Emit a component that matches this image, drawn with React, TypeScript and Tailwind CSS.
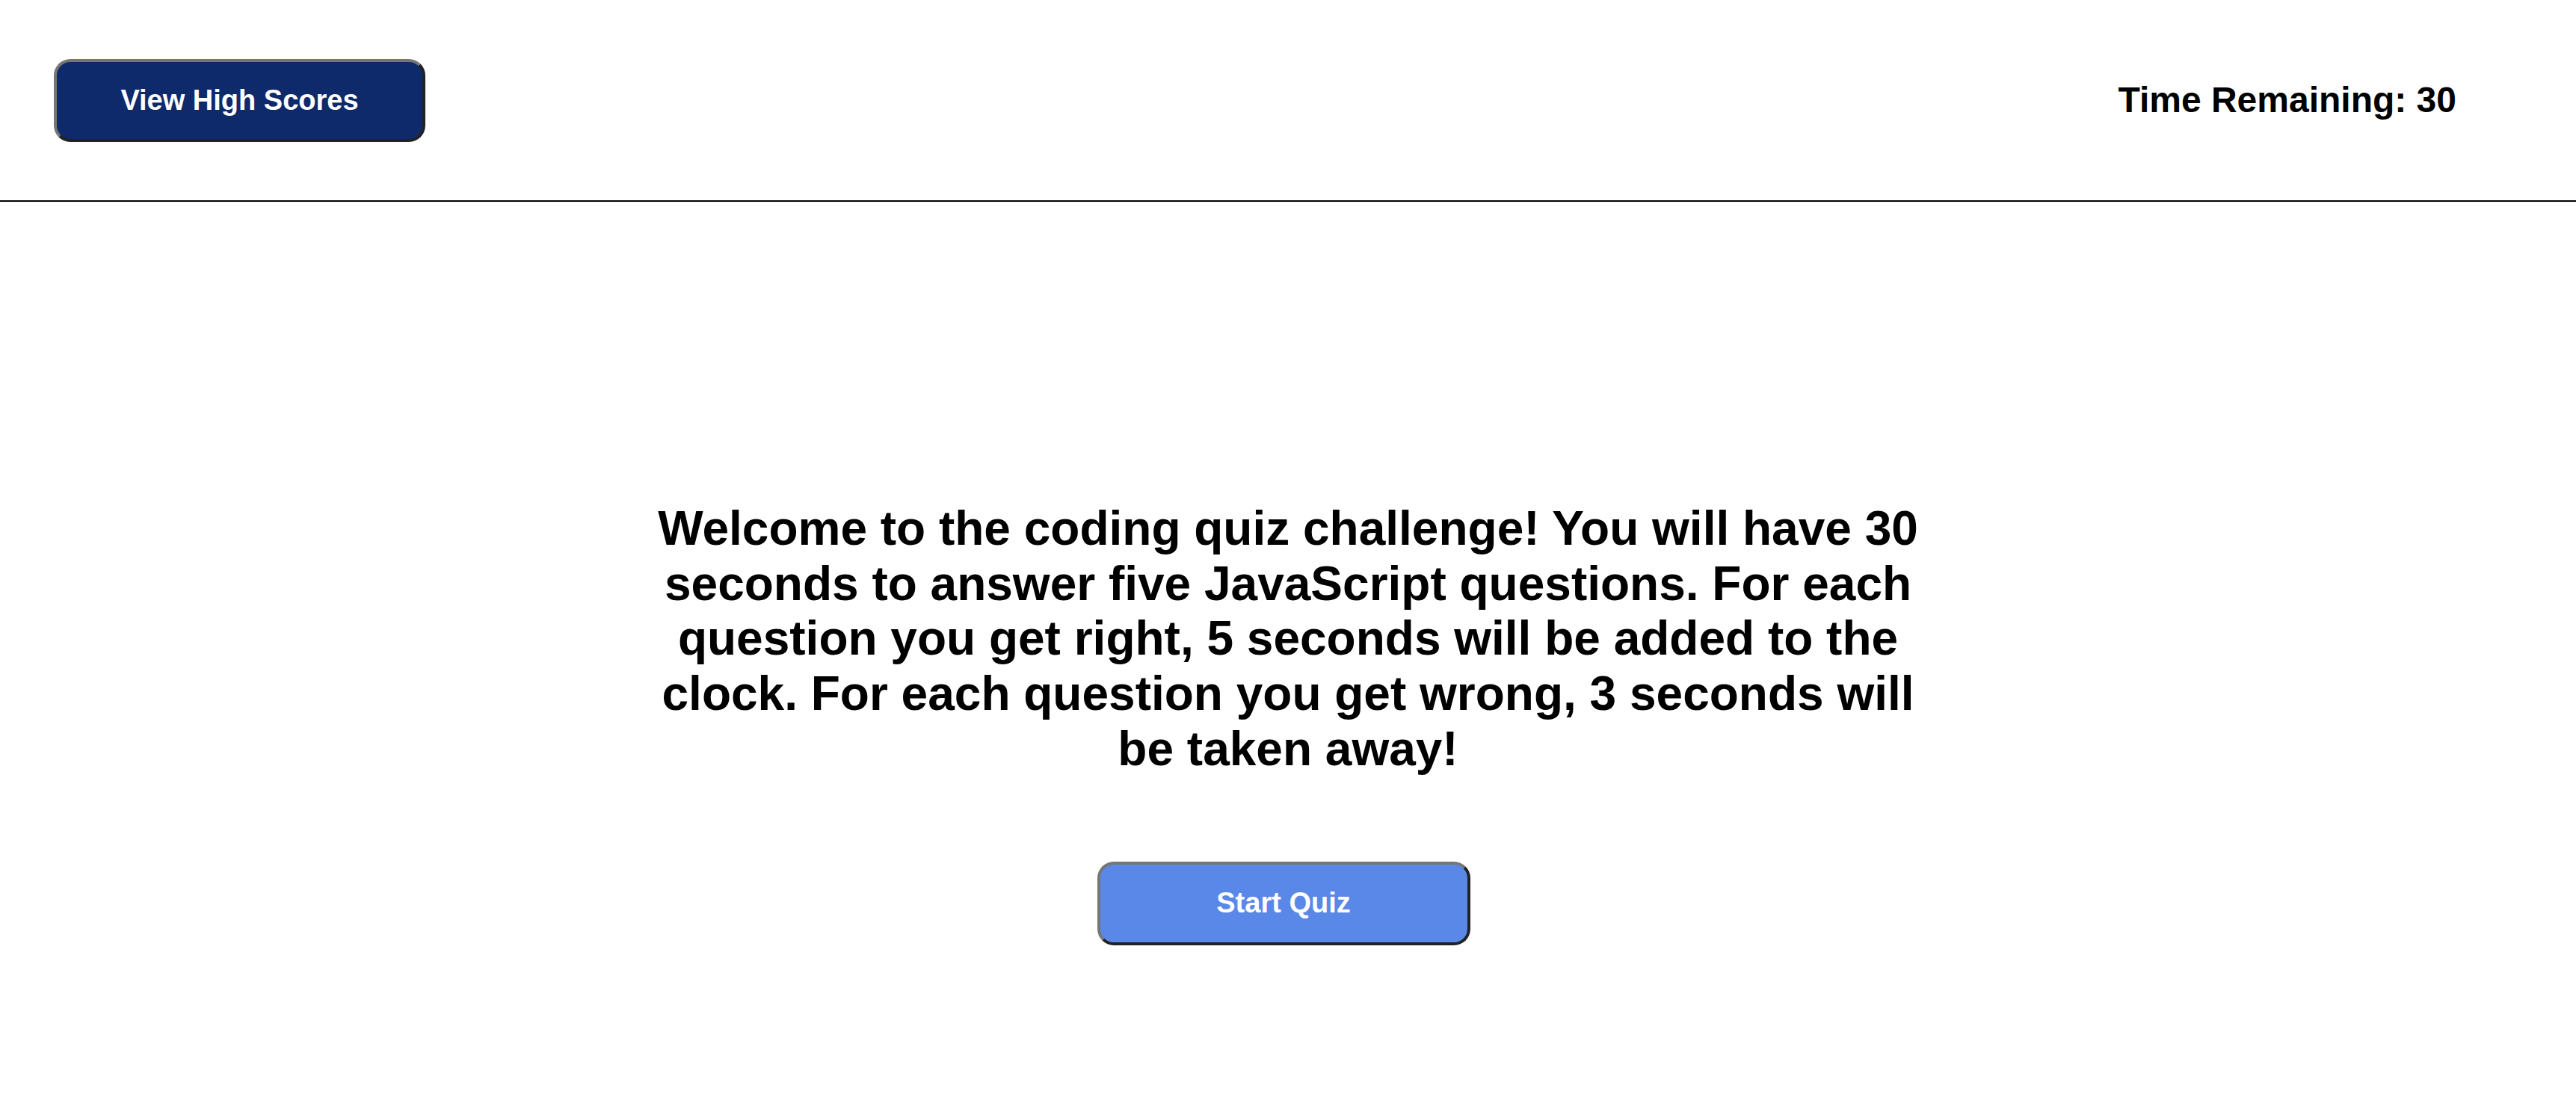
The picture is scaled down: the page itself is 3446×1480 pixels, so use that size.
export default function App() {
    return (
        <div className="min-h-screen bg-white text-black font-['Liberation_Sans',Arial,sans-serif]">

            {/* Header */}
            <header className="flex h-[270px] items-center justify-between border-b-2 border-black pl-[72px] pr-[160px]">
                <button className="h-[111px] w-[497px] rounded-[22px] border-4 border-t-[#767676] border-l-[#767676] border-b-[#222222] border-r-[#222222] bg-[#0f2a6b] text-[38px] font-bold text-white">
                    View High Scores
                </button>
                <div className="text-[48px] font-bold">Time Remaining: 30</div>
            </header>

            {/* Intro */}
            <main className="flex flex-col items-center pt-[401px]">
                <p className="w-[1723px] text-center text-[64px] font-bold leading-[73.7px]">
                    Welcome to the coding quiz challenge! You will have 30 seconds to answer five JavaScript questions. For each question you get right, 5 seconds will be added to the clock. For each question you get wrong, 3 seconds will be taken away!
                </p>
                <button className="mt-[113px] h-[112px] w-[499px] -translate-x-[6px] rounded-[22px] border-4 border-t-[#767676] border-l-[#767676] border-b-[#222222] border-r-[#222222] bg-[#5a88e8] text-[38px] font-bold text-white">
                    Start Quiz
                </button>
            </main>
        </div>
    );
}
